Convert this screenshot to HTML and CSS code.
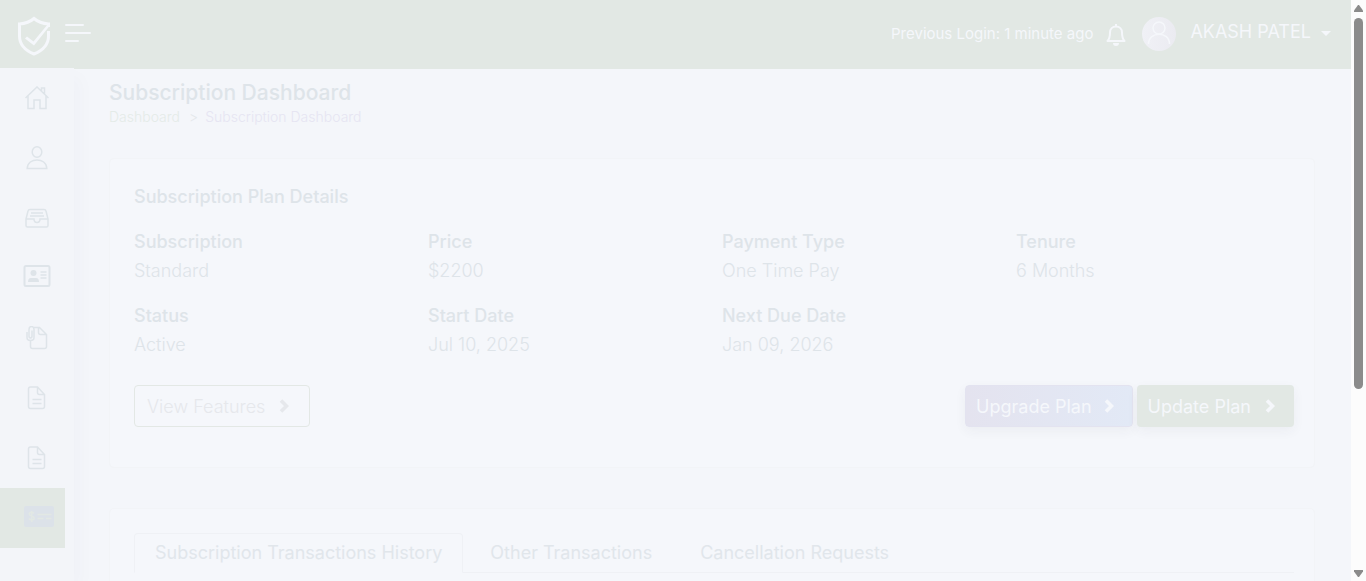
FILE: index.html
```html
<!DOCTYPE html>
<html lang="en">
<head>
<meta charset="utf-8">
<title>Subscription Dashboard</title>
<link rel="stylesheet" href="styles.css">
</head>
<body>
<svg class="defs" aria-hidden="true">
  <symbol id="chevron" viewBox="0 0 10 14"><path d="M2 1.500l5.500 5.500L2 12.500" fill="none" stroke="currentColor" stroke-width="3.600"/></symbol>
  <symbol id="file" viewBox="0 0 24 24"><path d="M12.500 1H5.500Q3.500 1 3.500 3v17.500q0 2 2 2h12q2 0 2-2V8.500zM12.500 1v5.500q0 2 2 2h5M7.500 13.500h9M7.500 17.500h9"/></symbol>
</svg>
<div class="shell">
  <div class="app">
    <header class="topbar">
      <a class="logo" href="#" aria-label="Home"><svg width="34" height="40" viewBox="0 0 34 40"><path d="M31.500 11V8C25 7.500 20.500 5.500 17 2.500 13.500 5.500 9 7.500 2.500 8v12c0 9 6 14.500 14.500 18C25.500 34.500 31.500 29 31.500 20v-5" fill="none" stroke="currentColor" stroke-width="3"/><path d="M8 22.500l2-2 6.500 5L31 8l1.500 2L17 29.500z" fill="currentColor"/></svg></a>
      <button class="icon-btn menu" aria-label="Toggle menu"><svg width="26" height="20" viewBox="0 0 26 20"><path d="M1 2h17M1 10h24M1 18h12" stroke="currentColor" stroke-width="2" stroke-linecap="round"/></svg></button>
      <span class="last-login">Previous Login: 1 minute ago</span>
      <button class="icon-btn bell" aria-label="Notifications"><svg width="20" height="24" viewBox="0 0 20 24"><path d="M1.500 18C3.500 16 4 13.500 4 9.500c0-3.500 2.500-6 6-6s6 2.500 6 6c0 4 .5 6.500 2.500 8.500z" fill="none" stroke="currentColor" stroke-width="2" stroke-linejoin="round"/><path d="M9 1h2v2H9zM7 20h6a3 3 0 0 1-6 0z" fill="currentColor"/></svg></button>
      <button class="user"><span class="avatar"><svg width="34" height="34" viewBox="0 0 34 34" fill="none" stroke="currentColor" stroke-width="1.500"><circle cx="17" cy="11" r="6"/><path d="M6.500 27c0-13 21-13 21 0"/></svg></span><span class="name">AKASH PATEL</span><svg width="10" height="5" viewBox="0 0 10 5"><path d="M0 0h10L5 5z" fill="currentColor"/></svg></button>
    </header>
    <div class="body">
      <nav class="sidebar" aria-label="Main">
        <a href="#" aria-label="Dashboard"><svg viewBox="0 0 24 24"><path d="M.5 12L12 1l11.500 11M3 10v12.500h6V14h6v8.500h6V10M16.500 5V2h3v6"/></svg></a>
        <a href="#" aria-label="Profile"><svg viewBox="0 0 24 24"><ellipse cx="12" cy="6" rx="4.800" ry="5.200"/><path d="M2.200 22.500c.3-11.500 19.300-11.500 19.600 0z"/></svg></a>
        <a href="#" aria-label="Inbox"><svg viewBox="0 0 24 24"><path d="M1 13L3 5q.3-1.500 2-1.500h14q1.700 0 2 1.500l2 8v6.500q0 1.500-1.500 1.500H2.500q-1.500 0-1.500-1.500zM1 13h8q0 3.500 3 3.500t3-3.500h8M6 7h12M5 10h14"/></svg></a>
        <a href="#" aria-label="Identity card"><svg class="wide" viewBox="0 0 28 24"><rect x="1.500" y="1" width="25" height="20" rx="1.500" stroke-width="2"/><g fill="currentColor" stroke="none"><circle cx="10.500" cy="8" r="3"/><path d="M5 17q0-4 3-4h5q3 0 3 4z"/></g><path d="M17.500 7h6M17.500 10h6M17.500 13h6"/></svg></a>
        <a href="#" aria-label="Attachments"><svg viewBox="0 0 24 24"><path d="M9 1.500h5.500l7 7v12q0 2-2 2h-12q-2 0-2-2V15M13.500 1.500v5q0 2 2 2h6M2 6v5.500c0 4 7 4 7 0V3.500c0-4-5-4-5 0V10c0 2.500 3 2.500 3 0V4.500"/></svg></a>
        <a href="#" aria-label="Documents"><svg viewBox="0 0 24 24"><use href="#file"/></svg></a>
        <a href="#" aria-label="Reports"><svg viewBox="0 0 24 24"><use href="#file"/></svg></a>
        <a class="active" href="#" aria-label="Subscription"><svg class="money" viewBox="0 0 30 24"><rect x="0" y="0" width="30" height="21" rx="2" fill="currentColor" stroke="none"/><path class="cut" d="M10 7.500C8.500 5.800 5.200 6 5.200 8c0 2.500 5 1.500 5 4.200 0 2-3.600 2.400-5.200.3M7.700 5v11M13.500 8.500h14M13.500 12.500h6M22 12.500h5.500"/></svg></a>
      </nav>
      <main class="content">
        <h1>Subscription Dashboard</h1>
        <nav class="crumbs" aria-label="Breadcrumb"><a href="#">Dashboard</a><span class="sep">&gt;</span><span class="here">Subscription Dashboard</span></nav>
        <section class="card plan">
          <h2>Subscription Plan Details</h2>
          <dl class="details">
            <div><dt>Subscription</dt><dd>Standard</dd></div>
            <div><dt>Price</dt><dd>$2200</dd></div>
            <div><dt>Payment Type</dt><dd>One Time Pay</dd></div>
            <div><dt>Tenure</dt><dd>6 Months</dd></div>
            <div><dt>Status</dt><dd>Active</dd></div>
            <div><dt>Start Date</dt><dd>Jul 10, 2025</dd></div>
            <div><dt>Next Due Date</dt><dd>Jan 09, 2026</dd></div>
          </dl>
          <div class="actions">
            <button class="btn outline">View Features<svg><use href="#chevron"/></svg></button>
            <button class="btn upgrade">Upgrade Plan<svg><use href="#chevron"/></svg></button>
            <button class="btn update">Update Plan<svg><use href="#chevron"/></svg></button>
          </div>
        </section>
        <section class="card history">
          <div class="tabs" role="tablist">
            <button role="tab" aria-selected="true">Subscription Transactions History</button>
            <button role="tab" aria-selected="false">Other Transactions</button>
            <button role="tab" aria-selected="false">Cancellation Requests</button>
          </div>
        </section>
      </main>
    </div>
  </div>
  <div class="scrollbar" aria-hidden="true">
    <svg width="9" height="7" viewBox="0 0 9 7"><path d="M4 0h1l4 5.500V7H0V5.500z"/></svg>
    <div class="track"><div class="thumb"></div></div>
    <svg width="9" height="7" viewBox="0 0 9 7"><path d="M4 7h1l4-5.500V0H0v1.500z"/></svg>
  </div>
</div>
</body>
</html>
```
FILE: styles.css
```css
* { box-sizing: border-box; }
body {
  margin: 0;
  background: #f4f6fa;
  color: #dee4e9;
  font: 300 18px/29px Inter, "Liberation Sans", sans-serif;
}
button { font: inherit; color: inherit; background: none; border: 0; padding: 0; cursor: pointer; }
a { color: inherit; text-decoration: none; }
h1, h2, dl, dd { margin: 0; }
.defs { position: absolute; width: 0; height: 0; }
.shell { display: flex; height: 100vh; overflow: hidden; }
.app { flex: 1; min-width: 0; display: flex; flex-direction: column; }

.topbar {
  display: flex;
  align-items: center;
  flex: none;
  height: 69px;
  padding: 2px 20px 0 17px;
  background: #e2e8e4;
  color: #f5f7fb;
}
.logo svg, .icon-btn svg, .avatar svg { display: block; }
.menu { margin: 0 auto 6px 14px; }
.last-login { font-size: 15px; font-weight: 400; padding-bottom: 5px; }
.bell { margin: 0 16px 2px 13px; }
.user { display: flex; align-items: center; gap: 10px; padding-bottom: 4px; font-weight: 400; }
.name { padding-bottom: 4px; }
.avatar { border-radius: 50%; margin-right: 4px; background: linear-gradient(90deg, #f0f1f6, #ebebf1); }

.body { flex: 1; display: flex; min-height: 0; }
.sidebar {
  flex: none;
  width: 74px;
  margin-top: -1px;
  background: #f3f5f9;
  box-shadow: 8px 8px 16px rgba(60, 60, 80, 0.02);
}
.sidebar a { display: flex; align-items: center; height: 60px; width: 65px; padding-left: 25px; }
.sidebar svg { width: 24px; height: 24px; flex: none; fill: none; stroke: currentColor; stroke-width: 1.5; }
.sidebar .wide { width: 28px; margin: 0 0 2px -2px; }
.sidebar .money { width: 30px; margin-left: -1px; }
.sidebar .active { background: #e2e8e4; color: #dce2e9; }
.sidebar .cut { stroke: #e2e8e4; }

.content { flex: 1; min-width: 0; padding: 9px 36px 0 35px; }
h1 { font-size: 21px; font-weight: 500; line-height: 30px; }
.crumbs { font-size: 14px; line-height: 18px; color: #e6e5f2; }
.crumbs a { color: #e4ebe8; }
.sep { margin: 0 7px 0 9px; color: #e4e8eb; }
.card { border: 1px solid #f2f4f7; border-radius: 5px; background: #f5f7fb; padding: 24px; }
.plan { margin-top: 32px; padding: 23px 20px 40px 24px; }
h2, dt { font-size: 18px; font-weight: 500; line-height: 29px; }
.details {
  display: grid;
  grid-template-columns: repeat(4, 1fr);
  row-gap: 16px;
  margin: 16px -16px 26px 0;
}
.actions { display: flex; gap: 4px; }
.btn {
  display: flex;
  align-items: center;
  gap: 12px;
  height: 42px;
  padding: 0 18px 0 10px;
  border: 1px solid transparent;
  border-radius: 4px;
  white-space: nowrap;
}
.btn svg { width: 10px; height: 14px; }
.outline { margin-right: auto; padding: 0 20px 0 12px; gap: 14px; border-color: #e3e8e5; color: #e6e8ec; }
.upgrade, .update { color: #f5f7fb; font-weight: 400; box-shadow: 0 4px 12px rgba(60, 60, 70, 0.05); }
.upgrade { background: linear-gradient(90deg, #e4e3ef, #e2e9f6); border-color: #e3e3f0; }
.update { background: #e2e8e4; gap: 14px; }

.history { margin-top: 40px; min-height: 200px; padding-right: 20px; }
.tabs { display: flex; gap: 6px; border-bottom: 1px solid #eff1f5; }
.tabs button { height: 40px; padding: 0 20px 2px; border: 1px solid transparent; border-radius: 4px 4px 0 0; margin-bottom: -1px; white-space: nowrap; font-weight: 400; color: #e1e6eb; }
.tabs [aria-selected="true"] { border-color: #eff1f5; border-bottom-color: #f5f7fb; background: #f5f7fb; }

.scrollbar {
  flex: none;
  width: 15px;
  display: flex;
  flex-direction: column;
  align-items: center;
  gap: 6px;
  padding: 5px 0 4px;
  background: #fcfcfc;
}
.scrollbar svg { fill: #8b8b8b; flex: none; }
.track { flex: 1; width: 9px; }
.thumb { height: 68%; border-radius: 5px; background: #8b8b8b; }
```
